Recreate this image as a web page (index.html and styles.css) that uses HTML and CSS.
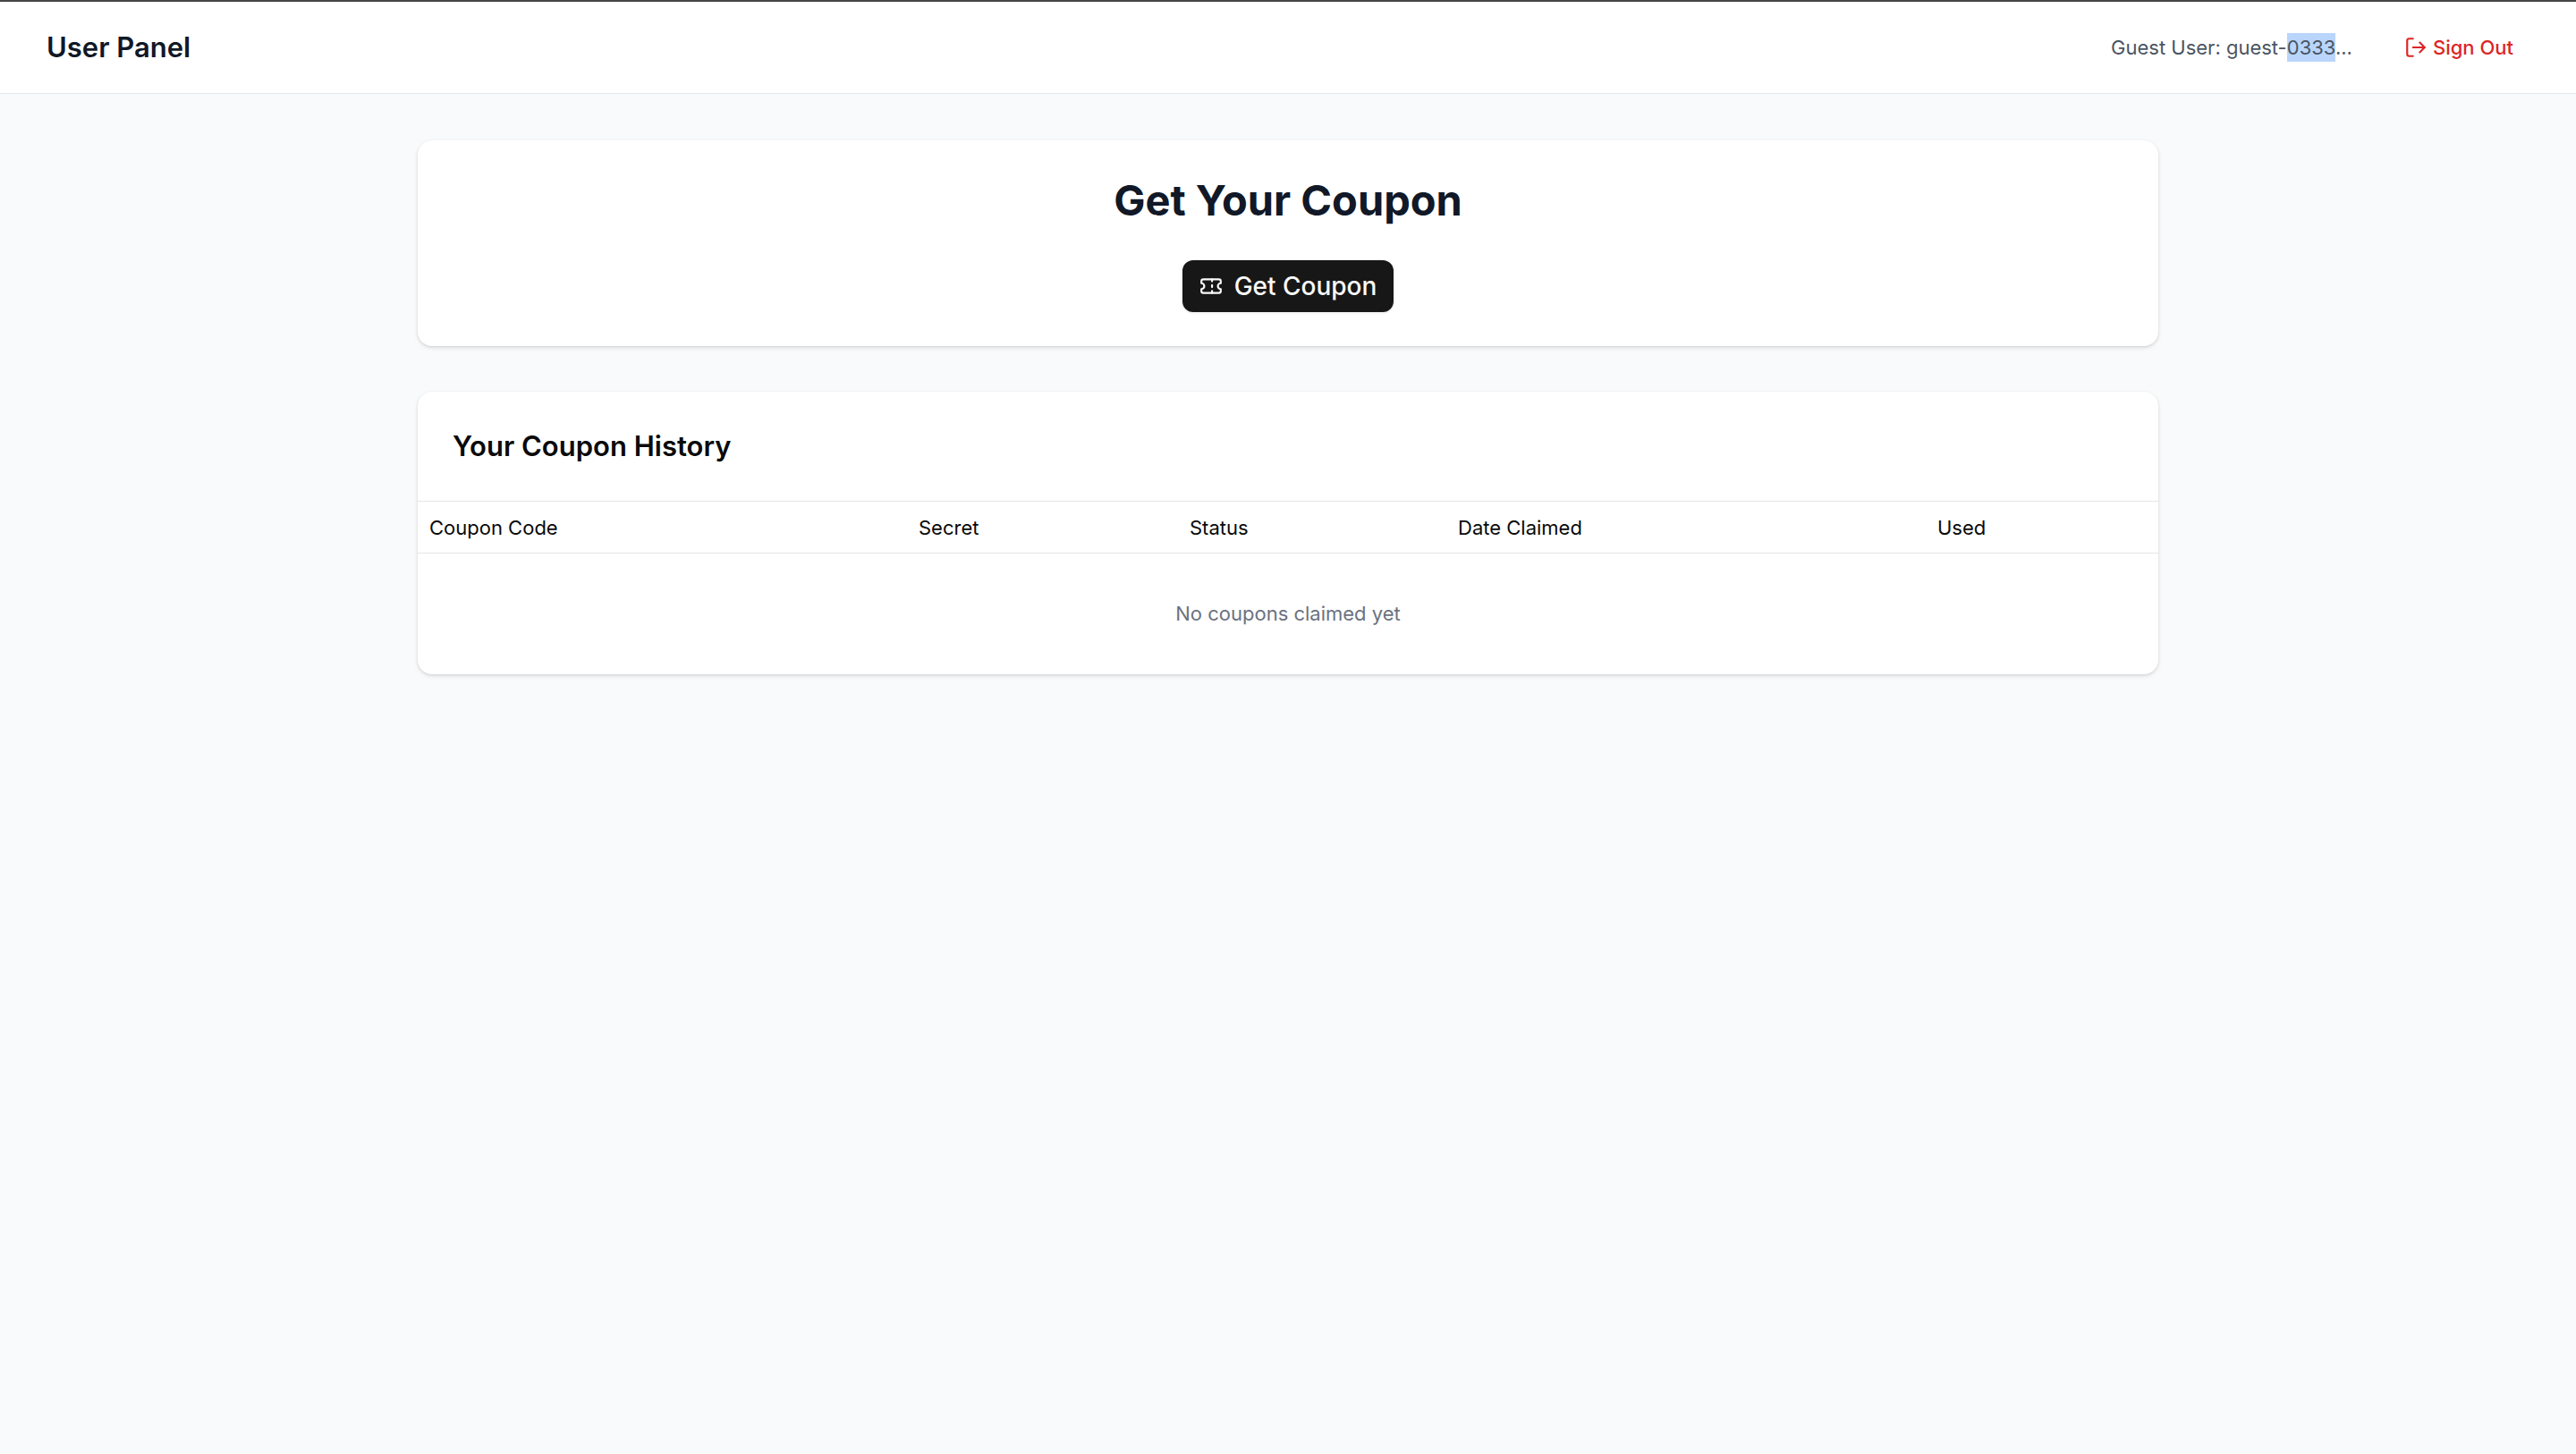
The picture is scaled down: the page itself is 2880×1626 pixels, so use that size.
FILE: index.html
```html
<!DOCTYPE html>
<html lang="en">
<head>
<meta charset="utf-8">
<title>User Panel</title>
<link rel="stylesheet" href="styles.css">
</head>
<body>
<header class="topbar">
  <span class="brand">User Panel</span>
  <div class="account">
    <span class="guest">Guest User: guest-<mark class="selected">0333</mark>...</span>
    <button class="signout" type="button">
      <svg class="icon" viewBox="0 0 24 24" aria-hidden="true"><path d="M9 21H5a2 2 0 0 1-2-2V5a2 2 0 0 1 2-2h4"/><path d="m16 17 5-5-5-5"/><path d="M21 12H9"/></svg>
      Sign Out
    </button>
  </div>
</header>
<main class="content">
  <section class="card claim">
    <h1 class="claim-title">Get Your Coupon</h1>
    <button class="claim-button" type="button">
      <svg class="icon" viewBox="0 0 24 24" aria-hidden="true"><path d="M2 9a3 3 0 0 1 0 6v2a2 2 0 0 0 2 2h16a2 2 0 0 0 2-2v-2a3 3 0 0 1 0-6V7a2 2 0 0 0-2-2H4a2 2 0 0 0-2 2Z"/><path d="M13 5v2"/><path d="M13 17v2"/><path d="M13 11v2"/></svg>
      Get Coupon
    </button>
  </section>
  <section class="card">
    <h2 class="history-title">Your Coupon History</h2>
    <table class="history">
      <colgroup><col class="col-code"><col class="col-secret"><col class="col-status"><col class="col-date"><col></colgroup>
      <thead>
        <tr><th>Coupon Code</th><th>Secret</th><th>Status</th><th>Date Claimed</th><th>Used</th></tr>
      </thead>
      <tbody>
        <tr><td class="empty" colspan="5">No coupons claimed yet</td></tr>
      </tbody>
    </table>
  </section>
</main>
</body>
</html>
```
FILE: styles.css
```css
* { box-sizing: border-box; }
body {
  margin: 0;
  min-height: 100vh;
  background: #f9fafb;
  border-top: 2px solid #444;
  color: #0a0a0a;
  font-family: Inter, "Liberation Sans", sans-serif;
  font-size: 22px;
  line-height: 32px;
}
button { border: 0; font: inherit; cursor: pointer; }
.icon {
  width: 26px;
  height: 26px;
  fill: none;
  stroke: currentColor;
  stroke-width: 2;
  stroke-linecap: round;
  stroke-linejoin: round;
}
.topbar {
  display: flex;
  align-items: center;
  justify-content: space-between;
  height: 103px;
  padding: 0 52px;
  background: #fff;
  border-bottom: 1px solid #e5e7eb;
}
.brand { color: #111827; font-size: 31px; font-weight: 600; }
.account { display: flex; align-items: center; gap: 40px; }
.guest { color: #4b5563; }
.selected { background: #b9d5fb; color: inherit; padding: 3px 0; }
.signout {
  display: flex;
  align-items: center;
  gap: 6px;
  padding: 8px 18px;
  background: none;
  color: #dc2626;
  font-weight: 500;
}
.content {
  display: grid;
  gap: 51px;
  max-width: 1946px;
  margin: 52px auto;
}
.card {
  overflow: hidden;
  background: #fff;
  border-radius: 16px;
  box-shadow: 0 2px 5px rgb(0 0 0 / 10%), 0 1px 3px rgb(0 0 0 / 8%);
}
.claim {
  display: flex;
  flex-direction: column;
  align-items: center;
  gap: 38px;
  padding: 38px;
}
.claim-title { margin: 0; color: #111827; font-size: 47px; font-weight: 700; line-height: 58px; }
.claim-button {
  display: flex;
  align-items: center;
  gap: 13px;
  height: 58px;
  padding: 0 19px;
  border-radius: 12px;
  background: #171717;
  box-shadow: 0 1px 3px rgb(0 0 0 / 10%);
  color: #fafafa;
  font-size: 28px;
  font-weight: 500;
}
.history-title { margin: 0; padding: 39px; font-size: 31px; font-weight: 600; line-height: 44px; }
.history { width: 100%; table-layout: fixed; border-collapse: collapse; }
.history thead tr { border-top: 1px solid #e5e5e5; border-bottom: 1px solid #e5e5e5; }
.history th { height: 58px; padding: 0 13px; font-weight: 400; text-align: left; }
.col-code { width: 547px; }
.col-secret { width: 303px; }
.col-status { width: 300px; }
.col-date { width: 536px; }
.empty { height: 135px; padding: 0; color: #6b7280; text-align: center; }
```
